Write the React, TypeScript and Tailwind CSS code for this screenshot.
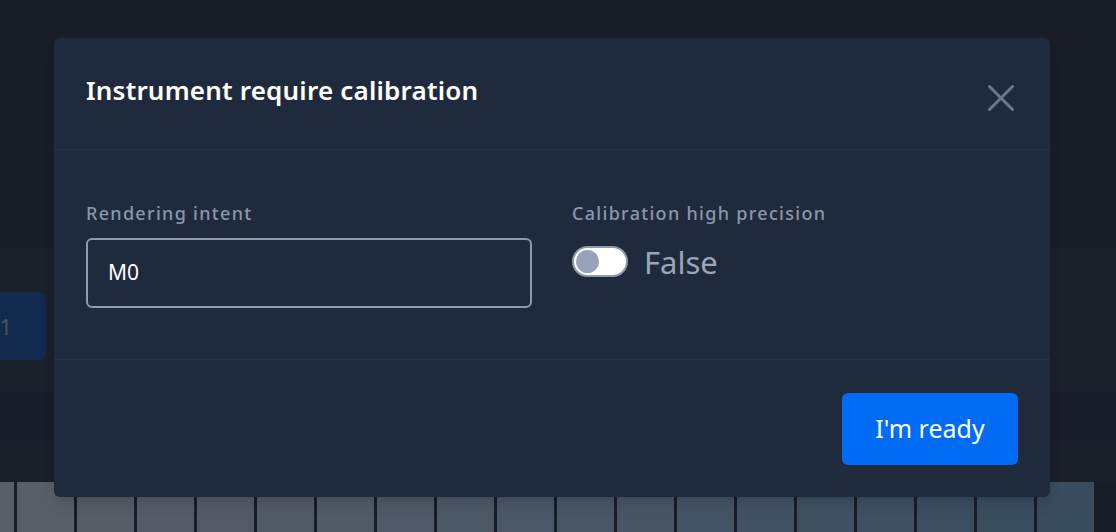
const tiles = [
  "#5a5e66", "#595e67", "#575d67", "#565c67", "#545b67", "#535a67", "#515a67",
  "#4f5967", "#4d5867", "#4b5767", "#495666", "#475565", "#455464", "#425263",
  "#405162", "#3e5061", "#3c4e60", "#3a4d5f", "#384c5e",
];

export default function App() {
  return (
    <div
      className="relative h-[532px] w-[1116px] overflow-hidden bg-[#181d28]"
      style={{ fontFamily: '"Noto Sans", "Open Sans", sans-serif' }}
    >
      {/* background app, dimmed */}
      <div className="flex h-full flex-col">
        <div className="h-[248px] bg-[#181d28]" />
        <div className="flex h-[144px] items-center bg-[#1b212b]">
          <div className="ml-[-20px] mt-[12px] flex h-[68px] w-[66px] items-center justify-end rounded-md bg-[#112a4e] pr-[34px] text-[22px] text-[#4b5563]">
            1
          </div>
        </div>
        <div className="h-[48px] bg-[#181e29]" />
        <div className="h-[42px] bg-[#1a1f2a]" />
        <div className="ml-[-43px] flex flex-1 gap-[3px]">
          {tiles.map((c, i) => (
            <div key={i} className="w-[57px] shrink-0" style={{ backgroundColor: c }} />
          ))}
        </div>
      </div>

      {/* modal */}
      <div className="absolute left-[54px] top-[38px] flex h-[459px] w-[996px] flex-col rounded-md bg-[#1f2b3d] shadow-lg">
        <div className="flex h-[112px] items-center justify-between border-b border-[#25324a] pl-8 pr-[35px]">
          <h2 className="mt-[-6px] text-[26px] font-semibold tracking-[0.2px] text-white">
            Instrument require calibration
          </h2>
          <button className="mt-[8px] text-[#6b788c]" aria-label="Close">
            <svg width="28" height="28" viewBox="0 0 28 28" fill="none" stroke="currentColor" strokeWidth="3" strokeLinecap="round">
              <path d="M2.5 2.5l23 23M25.5 2.5l-23 23" />
            </svg>
          </button>
        </div>

        <div className="grid h-[210px] grid-cols-2 gap-10 border-b border-[#25324a] px-8 pt-[50px]">
          <div className="flex flex-col">
            <label className="text-[18px] font-medium tracking-[1.3px] text-[#8a97ab]">
              Rendering intent
            </label>
            <div className="mt-[11px] flex h-[70px] items-center rounded-md border-2 border-[#8c99ae] px-5 text-[21px] text-white">
              M0
            </div>
          </div>
          <div className="flex flex-col">
            <label className="text-[18px] font-medium tracking-[1.3px] text-[#8a97ab]">
              Calibration high precision
            </label>
            <div className="mt-[11px] flex items-center gap-4">
              <div className="flex h-[31px] w-[56px] items-center rounded-full border-2 border-[#8c99ae] bg-white px-[2px]">
                <div className="h-[23px] w-[23px] rounded-full bg-[#97a3b8]" />
              </div>
              <span className="mt-[1px] text-[31px] text-[#9aa6b8]">False</span>
            </div>
          </div>
        </div>

        <div className="flex flex-1 items-start justify-end px-8 pt-[33px]">
          <button className="flex h-[72px] w-[176px] items-center justify-center rounded-md bg-[#006cf6] text-[25px] text-white">
            I'm ready
          </button>
        </div>
      </div>
    </div>
  );
}
